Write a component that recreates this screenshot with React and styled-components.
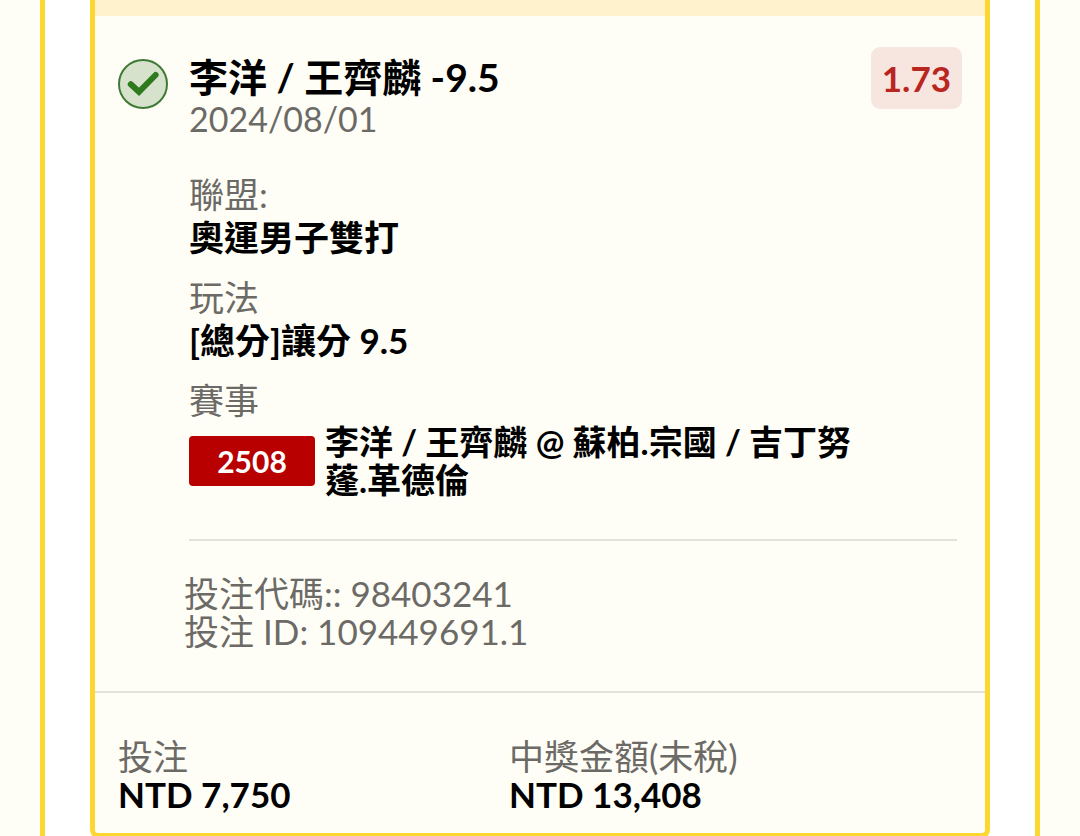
import styled, { createGlobalStyle } from "styled-components";

const ticket = {
    title: "李洋 / 王齊麟 -9.5",
    date: "2024/08/01",
    odds: "1.73",
    details: [
        { label: "聯盟:", value: "奧運男子雙打" },
        { label: "玩法", value: "[總分]讓分 9.5" },
    ],
    eventCode: "2508",
    eventName: "李洋 / 王齊麟 @ 蘇柏.宗國 / 吉丁努蓬.革德倫",
    codes: ["投注代碼:: 98403241", "投注 ID: 109449691.1"],
    amounts: [
        { label: "投注", value: "NTD 7,750" },
        { label: "中獎金額(未稅)", value: "NTD 13,408" },
    ],
};

function WonIcon() {
    return (
        <StatusIcon viewBox="0 0 50 50" role="img" aria-label="won">
            <circle cx="25" cy="25" r="24" fill="#d7e2cd" stroke="#3f7a34" strokeWidth="2" />
            <path d="M12.8 25.2 L21 32.8 L37.6 16" fill="none" stroke="#2f7a1c" strokeWidth="6" strokeLinecap="round" strokeLinejoin="miter" />
        </StatusIcon>
    );
}

function App() {
    return (
        <>
            <GlobalStyle />
            <Page>
                <Panel>
                    <Card>
                        <CardStrip />
                        <CardBody>
                            <WonIcon />
                            <Selection>
                                <Title>{ticket.title}</Title>
                                <DateText>{ticket.date}</DateText>
                            </Selection>
                            <Odds>{ticket.odds}</Odds>
                            <Details>
                                {ticket.details.map((detail) => (
                                    <div key={detail.label}>
                                        <dt>{detail.label}</dt>
                                        <dd>{detail.value}</dd>
                                    </div>
                                ))}
                                <div>
                                    <dt>賽事</dt>
                                    <EventRow>
                                        <EventCode>{ticket.eventCode}</EventCode>
                                        <EventName>{ticket.eventName}</EventName>
                                    </EventRow>
                                </div>
                            </Details>
                            <Codes>
                                {ticket.codes.map((code) => (
                                    <li key={code}>{code}</li>
                                ))}
                            </Codes>
                        </CardBody>
                        <Amounts>
                            {ticket.amounts.map((amount) => (
                                <div key={amount.label}>
                                    <dt>{amount.label}</dt>
                                    <dd>{amount.value}</dd>
                                </div>
                            ))}
                        </Amounts>
                    </Card>
                </Panel>
            </Page>
        </>
    );
}

const yellow = "#fcd732";
const cream = "#fffef6";
const muted = "#6c6a66";
const line = "#e4e1db";

const GlobalStyle = createGlobalStyle`
    * {
        box-sizing: border-box;
    }

    body {
        margin: 0;
        background: ${cream};
        color: #000;
        font-family: Lato, "Noto Sans CJK TC", sans-serif;
        font-size: 35px;
        line-height: 38px;
    }

    dl, dd, ul, h2, p {
        margin: 0;
        padding: 0;
    }
`;

const Page = styled.main`
    height: 100vh;
    padding: 0 40px;
    overflow: hidden;
`;

const Panel = styled.section`
    min-height: 100%;
    padding: 0 45px;
    border: solid ${yellow};
    border-width: 0 5px;
    background: #fff;
`;

const Card = styled.article`
    border: 5px solid ${yellow};
    border-top: 0;
    border-radius: 0 0 8px 8px;
    background: ${cream};
`;

const CardStrip = styled.div`
    height: 16px;
    background: #fff2cd;
`;

const CardBody = styled.div`
    display: grid;
    grid-template-columns: 50px 1fr auto;
    column-gap: 21px;
    padding: 31px 23px 41px;
`;

const StatusIcon = styled.svg`
    width: 50px;
    height: 50px;
    margin-top: 12px;
`;

const Selection = styled.div`
    padding-top: 9px;
    line-height: 42px;
`;

const Title = styled.h2`
    font-size: 39px;
    font-weight: 700;
`;

const DateText = styled.p`
    color: ${muted};
    font-size: 34px;
`;

const Odds = styled.strong`
    align-self: start;
    padding: 10px 11px;
    border-radius: 9px;
    background: #f7e6e0;
    color: #b9251f;
    font-weight: 700;
    line-height: 42px;
`;

const Details = styled.dl`
    grid-column: 2 / -1;
    display: grid;
    gap: 17px;
    margin: 33px 5px 0 0;
    padding-bottom: 40px;
    border-bottom: 2px solid ${line};
    line-height: 43px;

    dt {
        color: ${muted};
    }
    dd {
        font-weight: 700;
    }
`;

const EventRow = styled.dd`
    display: flex;
    align-items: center;
    gap: 10px;
    padding: 1px 100px 0 0;
    font-size: 34px;
    line-height: 38px;
`;

const EventCode = styled.span`
    flex: none;
    width: 126px;
    border-radius: 4px;
    background: #b80000;
    color: #fff;
    font-size: 30px;
    line-height: 50px;
    text-align: center;
`;

const EventName = styled.span`
    flex: 1;
`;

const Codes = styled.ul`
    grid-column: 2 / -1;
    margin: 33px 0 0 -5px;
    color: ${muted};
    list-style: none;
`;

const Amounts = styled.dl`
    display: grid;
    grid-template-columns: 1fr 1fr;
    padding: 44px 85px 20px 23px;
    border-top: 2px solid ${line};

    dt {
        color: ${muted};
    }
    dd {
        font-weight: 700;
    }
`;

export default App;
